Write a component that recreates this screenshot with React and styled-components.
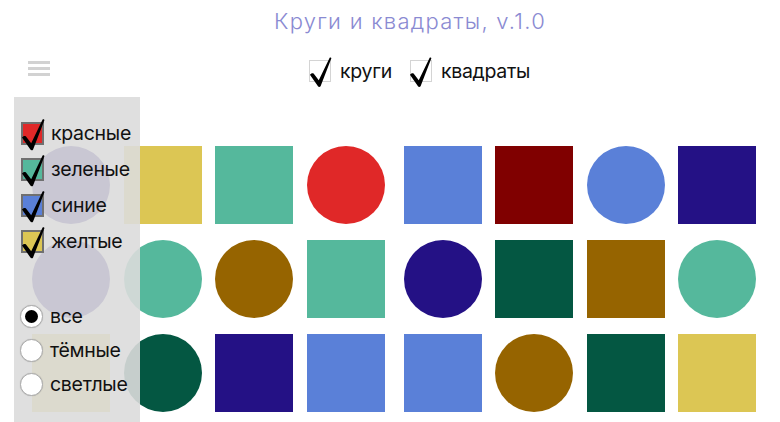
import styled, { createGlobalStyle } from "styled-components";

const GlobalStyle = createGlobalStyle`
  * { box-sizing: border-box; }
  body {
    margin: 0;
    background: #ffffff;
    font-family: Inter, "Noto Sans", sans-serif;
  }
`;

const RED = "#e02828";
const TEAL = "#55b89c";
const BLUE = "#5a80d8";
const YELLOW = "#dcc654";
const MAROON = "#800000";
const INDIGO = "#241185";
const BROWN = "#966400";
const PINE = "#045742";

const shapes = [
  ["c", INDIGO], ["s", YELLOW], ["s", TEAL], ["c", RED], ["s", BLUE], ["s", MAROON], ["c", BLUE], ["s", INDIGO],
  ["c", INDIGO], ["c", TEAL], ["c", BROWN], ["s", TEAL], ["c", INDIGO], ["s", PINE], ["s", BROWN], ["c", TEAL],
  ["s", YELLOW], ["c", PINE], ["s", INDIGO], ["s", BLUE], ["s", BLUE], ["c", BROWN], ["s", PINE], ["s", YELLOW],
];

const colorFilters = [
  { label: "красные", color: RED },
  { label: "зеленые", color: TEAL },
  { label: "синие", color: BLUE },
  { label: "желтые", color: YELLOW },
];

const Page = styled.div`
  position: relative;
  height: 100vh;
  overflow: hidden;
`;

const Title = styled.h1`
  margin: 0;
  height: 40px;
  padding-left: 40px;
  text-align: center;
  font-size: 22px;
  line-height: 42px;
  font-weight: 300;
  letter-spacing: 1.25px;
  color: #8a8ad2;
`;

const Toolbar = styled.div`
  display: flex;
  align-items: center;
  height: 60px;
  padding-left: 28px;
`;

const Burger = styled.div`
  display: flex;
  flex-direction: column;
  gap: 3px;
  width: 22px;
  align-self: flex-start;
  margin-top: 21px;

  span {
    display: block;
    height: 3px;
    background: #d2d2d2;
  }
`;

const Filters = styled.div`
  display: flex;
  align-items: center;
  gap: 18px;
  margin-left: 259px;
  margin-top: 2px;
`;

const Option = styled.label`
  display: flex;
  align-items: center;
  gap: ${(p) => p.$gap || 9}px;
  height: ${(p) => p.$height || 36}px;
  font-size: 19.5px;
  letter-spacing: -0.3px;
  color: #111;
  cursor: pointer;
`;

const Box = styled.span`
  position: relative;
  flex: none;
  width: ${(p) => p.$size}px;
  height: ${(p) => p.$size}px;
  background: ${(p) => p.$fill || "#fff"};
  border: ${(p) => (p.$fill ? "2px solid #707070" : "1.5px solid #d4d4d4")};

  svg {
    position: absolute;
    left: ${(p) => (p.$fill ? -2 : -1.5)}px;
    top: ${(p) => (p.$fill ? -2 : -1.5)}px;
    overflow: visible;
  }
`;

const Board = styled.div`
  display: grid;
  grid-template-columns: 92px 91px 92px 97px 91px 92px 91px 78px;
  grid-auto-rows: 78px;
  row-gap: 16px;
  padding: 46px 0 0 32px;
`;

const Shape = styled.div`
  width: 78px;
  height: 78px;
  background: ${(p) => p.$color};
  border-radius: ${(p) => (p.$round ? "50%" : "0")};
`;

const Sidebar = styled.aside`
  position: absolute;
  top: 97px;
  left: 14px;
  bottom: 0;
  width: 126px;
  padding: 18px 0 0 7px;
  background: rgba(220, 220, 220, 0.9);
`;

const Group = styled.div`
  display: flex;
  flex-direction: column;
  margin-bottom: ${(p) => p.$after || 0}px;
`;

const Radio = styled.span`
  flex: none;
  display: flex;
  align-items: center;
  justify-content: center;
  width: 23px;
  height: 23px;
  margin-left: -1px;
  border-radius: 50%;
  background: #fff;
  border: 1.5px solid #ababab;
  box-shadow: 0 0 1px rgba(0, 0, 0, 0.2);

  &::after {
    content: "";
    width: 13px;
    height: 13px;
    border-radius: 50%;
    background: ${(p) => (p.$on ? "#000" : "transparent")};
  }
`;

// check drawn in a 23px box space, top-right stroke runs above the box
const Check = ({ size }) => (
  <svg width={size} height={size} viewBox="0 0 23 23">
    <path
      d="M1 15.5 C2 14 3.8 13.4 5 14.4 L10.2 21.2 L21.6 -2.4 C22.3 -3 23.4 -2.7 23.4 -1.8 L12.1 27.4 C11.5 28.5 10 28.5 9.4 27.5 Z"
      fill="#000"
    />
  </svg>
);

const App = () => (
  <Page>
    <GlobalStyle />
    <Title>Круги и квадраты, v.1.0</Title>
    <Toolbar>
      <Burger>
        <span />
        <span />
        <span />
      </Burger>
      <Filters>
        <Option $height={40}>
          <Box $size={22}>
            <Check size={22} />
          </Box>
          круги
        </Option>
        <Option $height={40}>
          <Box $size={22}>
            <Check size={22} />
          </Box>
          квадраты
        </Option>
      </Filters>
    </Toolbar>
    <Board>
      {shapes.map(([kind, color], i) => (
        <Shape key={i} $round={kind === "c"} $color={color} />
      ))}
    </Board>
    <Sidebar>
      <Group $after={40}>
        {colorFilters.map((f) => (
          <Option key={f.label} $gap={7}>
            <Box $size={23} $fill={f.color}>
              <Check size={23} />
            </Box>
            {f.label}
          </Option>
        ))}
      </Group>
      <Group>
        {["все", "тёмные", "светлые"].map((label, i) => (
          <Option key={label} $gap={7} $height={34}>
            <Radio $on={i === 0} />
            {label}
          </Option>
        ))}
      </Group>
    </Sidebar>
  </Page>
);

export default App;
